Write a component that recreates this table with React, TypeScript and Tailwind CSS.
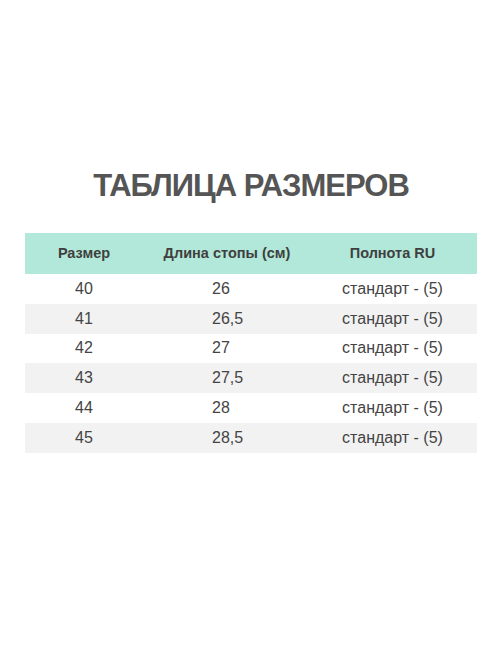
import React from "react";

const rows = [
  ["40", "26"],
  ["41", "26,5"],
  ["42", "27"],
  ["43", "27,5"],
  ["44", "28"],
  ["45", "28,5"],
];

export default function App() {
  return (
    <div className="w-[502px] h-[669px] bg-white pt-[166px] font-['Liberation_Sans',Arial,sans-serif]">
      <h1 className="text-center text-[31px] leading-[40px] font-bold tracking-[-1px] text-[#555555]">
        ТАБЛИЦА РАЗМЕРОВ
      </h1>
      <div className="mx-[25px] mt-[27px] w-[452px]">
        <div className="grid grid-cols-[118px_168px_166px] h-[41px] items-center bg-[#b2e8d9] text-[14.5px] font-bold text-[#3f3f3f]">
          <div className="text-center">Размер</div>
          <div className="text-center">Длина стопы (см)</div>
          <div className="text-center pr-[3px]">Полнота RU</div>
        </div>
        {rows.map(([size, len], i) => (
          <div
            key={size}
            className={`grid grid-cols-[118px_168px_166px] h-[29.8px] items-center text-[16px] text-[#444444] ${
              i % 2 === 1 ? "bg-[#f2f2f2]" : "bg-white"
            }`}
          >
            <div className="text-center">{size}</div>
            <div className="pl-[69px]">{len}</div>
            <div className="text-center pr-[3px]">стандарт - (5)</div>
          </div>
        ))}
      </div>
    </div>
  );
}
